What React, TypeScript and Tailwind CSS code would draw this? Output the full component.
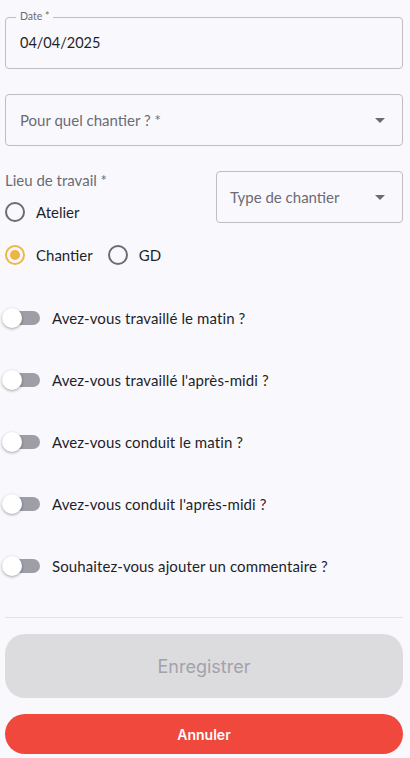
import React from "react";

const font = { fontFamily: "Lato, 'Noto Sans', sans-serif" };

function Arrow() {
  return (
    <svg width="10" height="5" viewBox="0 0 10 5" className="shrink-0">
      <path d="M0 0 L10 0 L5 5 Z" fill="#6b6b73" />
    </svg>
  );
}

function Radio({ checked, label }: { checked?: boolean; label: string }) {
  return (
    <div className="flex items-center">
      <div
        className={`w-[20px] h-[20px] rounded-full border-2 flex items-center justify-center ${
          checked ? "border-[#f0b445]" : "border-[#6b6b76]"
        }`}
      >
        {checked && <div className="w-[10px] h-[10px] rounded-full bg-[#f0b445]" />}
      </div>
      <span className="ml-[11px] text-[15px] text-[#1f1f2a]">{label}</span>
    </div>
  );
}

function Toggle({ label }: { label: string }) {
  return (
    <div className="flex items-center h-[20px] ml-[-3px]">
      <div className="relative w-[38px] h-[20px] shrink-0">
        <div className="absolute left-[6px] top-[3px] w-[32px] h-[14px] rounded-full bg-[#9d9ea6]" />
        <div className="absolute left-0 top-0 w-[20px] h-[20px] rounded-full bg-white shadow-[0_1px_3px_rgba(0,0,0,0.35)]" />
      </div>
      <span className="ml-[12px] text-[15px] text-[#1f1f2a] tracking-[0.1px]">{label}</span>
    </div>
  );
}

export default function App() {
  return (
    <div className="w-[410px] h-[758px] bg-[#f9f9fd] pl-[5px] pr-[7px] overflow-hidden" style={font}>
      {/* Date */}
      <div className="pt-[17px]">
        <div className="relative h-[52px] border border-[#bdbdc4] rounded-[4px] flex items-center px-[14px]">
          <span className="absolute -top-[9px] left-[10px] bg-[#f9f9fd] px-[4px] text-[10.5px] text-[#6b6b76]">
            Date *
          </span>
          <span className="text-[14.5px] text-[#1f1f2a]">04/04/2025</span>
        </div>
      </div>
      {/* Chantier select */}
      <div className="mt-[25px] h-[52px] border border-[#bdbdc4] rounded-[4px] flex items-center justify-between pl-[14px] pr-[17px]">
        <span className="text-[15px] text-[#6b6b76]">Pour quel chantier ? *</span>
        <Arrow />
      </div>
      {/* Lieu + Type */}
      <div className="mt-[25px] flex justify-between">
        <div className="flex flex-col">
          <span className="text-[15px] text-[#6b6b76] leading-[20px] mt-[-1px]">Lieu de travail *</span>
          <div className="mt-[11px]">
            <Radio label="Atelier" />
          </div>
        </div>
        <div className="w-[187px] h-[52px] border border-[#bdbdc4] rounded-[4px] flex items-center justify-between pl-[13px] pr-[17px]">
          <span className="text-[15px] text-[#6b6b76]">Type de chantier</span>
          <Arrow />
        </div>
      </div>
      <div className="mt-[20px] flex items-center gap-[15px]">
        <Radio checked label="Chantier" />
        <Radio label="GD" />
      </div>
      {/* Toggles */}
      <div className="mt-[42px] flex flex-col gap-[42px]">
        <Toggle label="Avez-vous travaillé le matin ?" />
        <Toggle label="Avez-vous travaillé l'après-midi ?" />
        <Toggle label="Avez-vous conduit le matin ?" />
        <Toggle label="Avez-vous conduit l'après-midi ?" />
        <Toggle label="Souhaitez-vous ajouter un commentaire ?" />
      </div>
      <div className="mt-[41px] h-px bg-[#e3e3ea]" />
      <button
        className="mt-[16px] w-full h-[64px] rounded-[20px] bg-[#dcdcde] text-[18px] text-[#a2a2ab]"
        style={{ fontFamily: "Inter, sans-serif" }}
      >
        Enregistrer
      </button>
      <button
        className="mt-[16px] w-full h-[40px] rounded-full bg-[#f0483c] text-[14px] font-semibold text-white"
        style={{ fontFamily: "Inter, sans-serif" }}
      >
        Annuler
      </button>
    </div>
  );
}
